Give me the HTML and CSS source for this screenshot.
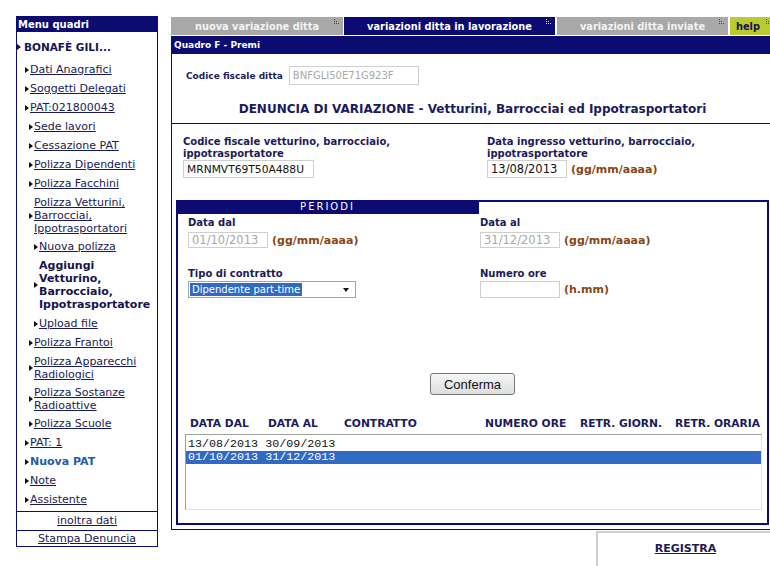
FILE: index.html
```html
<!DOCTYPE html>
<html lang="it">
<head>
  <meta charset="UTF-8">
  <title>Denuncia di variazione - Quadro F</title>
  <link rel="stylesheet" href="styles.css">
</head>
<body>
<div class="page">

  <aside class="menu">
    <div class="menu-head">Menu quadri</div>
    <ul class="menu-list">
      <li class="mi mi-root"><span class="arrow"></span><span>BONAFÈ GILI...</span></li>
      <li class="mi l1"><span class="arrow"></span><a href="#">Dati Anagrafici</a></li>
      <li class="mi l1"><span class="arrow"></span><a href="#">Soggetti Delegati</a></li>
      <li class="mi l1"><span class="arrow"></span><a href="#">PAT:021800043</a></li>
      <li class="mi l2"><span class="arrow"></span><a href="#">Sede lavori</a></li>
      <li class="mi l2"><span class="arrow"></span><a href="#">Cessazione PAT</a></li>
      <li class="mi l2"><span class="arrow"></span><a href="#">Polizza Dipendenti</a></li>
      <li class="mi l2"><span class="arrow"></span><a href="#">Polizza Facchini</a></li>
      <li class="mi l2 multi"><span class="arrow"></span><a href="#">Polizza Vetturini,<br>Barrocciai,<br>Ippotrasportatori</a></li>
      <li class="mi l3"><span class="arrow"></span><a href="#">Nuova polizza</a></li>
      <li class="mi l3 current"><span class="arrow"></span><span>Aggiungi<br>Vetturino,<br>Barrocciaio,<br>Ippotrasportatore</span></li>
      <li class="mi l3"><span class="arrow"></span><a href="#">Upload file</a></li>
      <li class="mi l2"><span class="arrow"></span><a href="#">Polizza Frantoi</a></li>
      <li class="mi l2 multi"><span class="arrow"></span><a href="#">Polizza Apparecchi<br>Radiologici</a></li>
      <li class="mi l2 multi"><span class="arrow"></span><a href="#">Polizza Sostanze<br>Radioattive</a></li>
      <li class="mi l2"><span class="arrow"></span><a href="#">Polizza Scuole</a></li>
      <li class="mi l1"><span class="arrow"></span><a href="#">PAT: 1</a></li>
      <li class="mi l1 new-pat"><span class="arrow"></span><span>Nuova PAT</span></li>
      <li class="mi l1"><span class="arrow"></span><a href="#">Note</a></li>
      <li class="mi l1"><span class="arrow"></span><a href="#">Assistente</a></li>
    </ul>
    <div class="menu-foot"><a href="#">inoltra dati</a></div>
    <div class="menu-foot last"><a href="#">Stampa Denuncia</a></div>
  </aside>

  <main class="main">
    <nav class="tabs">
      <div class="tab tab-off t1">nuova variazione ditta
        <svg class="fold" width="6" height="6" viewBox="0 0 6 6"><path d="M0 0h1v1H0zM0 2h1v1H0zM2 2h1v1H2zM0 4h1v1H0zM2 4h1v1H2zM4 4h1v1H4z" fill="#444"/></svg>
      </div>
      <div class="tab tab-on t2">variazioni ditta in lavorazione
        <svg class="fold" width="6" height="6" viewBox="0 0 6 6"><path d="M0 0h1v1H0zM0 2h1v1H0zM2 2h1v1H2zM0 4h1v1H0zM2 4h1v1H2zM4 4h1v1H4z" fill="#ddd"/></svg>
      </div>
      <div class="tab tab-off t3">variazioni ditta inviate
        <svg class="fold" width="6" height="6" viewBox="0 0 6 6"><path d="M0 0h1v1H0zM0 2h1v1H0zM2 2h1v1H2zM0 4h1v1H0zM2 4h1v1H2zM4 4h1v1H4z" fill="#444"/></svg>
      </div>
      <div class="tab tab-help t4">help
        <svg class="fold" width="6" height="6" viewBox="0 0 6 6"><path d="M0 0h1v1H0zM0 2h1v1H0zM2 2h1v1H2zM0 4h1v1H0zM2 4h1v1H2zM4 4h1v1H4z" fill="#444"/></svg>
      </div>
    </nav>

    <div class="quadro-bar">Quadro F - Premi</div>

    <div class="panel">
      <div class="panel-head">
        <div class="cf-row">
          <label class="lbl-small">Codice fiscale ditta</label>
          <input class="inp inp-cf" type="text" value="BNFGLI50E71G923F" disabled>
        </div>
        <h1 class="title">DENUNCIA DI VARIAZIONE - Vetturini, Barrocciai ed Ippotrasportatori</h1>
      </div>

      <div class="fields">
        <div class="field">
          <label class="lbl">Codice fiscale vetturino, barrocciaio,<br>ippotrasportatore</label>
          <input class="inp inp-code" type="text" value="MRNMVT69T50A488U">
        </div>
        <div class="field">
          <label class="lbl">Data ingresso vetturino, barrocciaio,<br>ippotrasportatore</label>
          <div class="inline">
            <input class="inp inp-date" type="text" value="13/08/2013">
            <span class="fmt">(gg/mm/aaaa)</span>
          </div>
        </div>
      </div>

      <section class="periodi">
        <div class="periodi-head">PERIODI</div>
        <div class="periodi-grid">
          <div class="field">
            <label class="lbl">Data dal</label>
            <div class="inline">
              <input class="inp inp-date" type="text" value="01/10/2013" disabled>
              <span class="fmt">(gg/mm/aaaa)</span>
            </div>
          </div>
          <div class="field">
            <label class="lbl">Data al</label>
            <div class="inline">
              <input class="inp inp-date" type="text" value="31/12/2013" disabled>
              <span class="fmt">(gg/mm/aaaa)</span>
            </div>
          </div>
          <div class="field">
            <label class="lbl">Tipo di contratto</label>
            <div class="select">
              <span class="select-value">Dipendente part-time</span>
              <span class="select-arrow"></span>
            </div>
          </div>
          <div class="field">
            <label class="lbl">Numero ore</label>
            <div class="inline">
              <input class="inp inp-hours" type="text" value="">
              <span class="fmt">(h.mm)</span>
            </div>
          </div>
        </div>

        <div class="actions">
          <button class="btn" type="button">Conferma</button>
        </div>

        <div class="list-head">
          <span>DATA DAL</span>
          <span>DATA AL</span>
          <span>CONTRATTO</span>
          <span>NUMERO ORE</span>
          <span>RETR. GIORN.</span>
          <span>RETR. ORARIA</span>
        </div>
        <div class="listbox">
          <div class="row">13/08/2013 30/09/2013</div>
          <div class="row selected">01/10/2013 31/12/2013</div>
        </div>
      </section>
    </div>

    <div class="footer">
      <div class="registra"><a href="#">REGISTRA</a></div>
    </div>
  </main>

</div>
</body>
</html>
```

FILE: styles.css
```css
* {
  box-sizing: border-box;
}

body {
  margin: 0;
  padding: 16px 0 0 16px;
  font-family: "DejaVu Sans", Verdana, sans-serif;
  color: #1b1b5b;
  background: #fff;
  overflow: hidden;
}

a {
  color: #1a1a55;
}

.page {
  display: flex;
  align-items: flex-start;
  gap: 13px;
}

/* menu laterale */
.menu {
  width: 142px;
  flex: none;
  border: 1px solid #0b0b72;
}

.menu-head {
  height: 15px;
  line-height: 15px;
  padding-left: 1px;
  background: #0b0b72;
  color: #fff;
  font-size: 10px;
  font-weight: bold;
}

.menu-list {
  list-style: none;
  margin: 0 0 2px;
  padding: 0;
}

.mi {
  display: flex;
  align-items: center;
  padding: 3px 0;
  font-size: 11px;
  line-height: 13px;
  white-space: nowrap;
}

.mi.multi {
  padding-bottom: 2px;
}

.arrow {
  flex: none;
  width: 0;
  height: 0;
  margin-right: 1px;
  border-left: 4px solid #111;
  border-top: 3px solid transparent;
  border-bottom: 3px solid transparent;
}

.mi-root {
  padding: 8px 0 6px;
  font-size: 10.5px;
  font-weight: bold;
  line-height: 14px;
  color: #14144f;
}

.mi-root .arrow {
  margin-right: 3px;
}

.l1 { padding-left: 8px; }
.l2 { padding-left: 12px; }
.l3 { padding-left: 17px; }

.current {
  font-weight: bold;
  color: #14144f;
}

.new-pat {
  font-weight: bold;
  color: #1e5ea8;
}

.menu-foot {
  height: 19px;
  line-height: 18px;
  border-top: 1px solid #0b0b72;
  text-align: center;
  font-size: 11px;
}

.menu-foot.last {
  height: 16px;
  line-height: 16px;
}

/* area principale */
.main {
  width: 602px;
  flex: none;
}

.tabs {
  display: flex;
  height: 18px;
  margin-top: 1px;
}

.tab {
  position: relative;
  display: flex;
  align-items: center;
  justify-content: center;
  height: 18px;
  font-size: 9.8px;
  font-weight: bold;
}

.tab-off {
  background: #a8a8a8;
  color: #f4f4f4;
}

.tab-on {
  background: #0b0b72;
  color: #fff;
}

.tab-help {
  background: #b9cb2e;
  color: #14144f;
  justify-content: flex-start;
  padding-left: 6px;
}

.t1 { width: 172px; }
.t2 { width: 211px; margin-left: 1px; }
.t3 { width: 171px; margin-left: 2px; }
.t4 { width: 43px; margin-left: 2px; }

.fold {
  position: absolute;
  top: 2px;
  right: 3px;
}

.t4 .fold {
  right: 1px;
}

.quadro-bar {
  height: 18px;
  line-height: 18px;
  margin-top: 1px;
  padding-left: 3px;
  background: #0b0b72;
  color: #fff;
  font-size: 9px;
  font-weight: bold;
}

.panel {
  border-left: 1px solid #0b0b72;
  border-bottom: 1px solid #0b0b72;
  padding-bottom: 4px;
}

.panel-head {
  padding: 12px 0 6px;
  border-bottom: 1px solid #0b0b72;
}

.cf-row {
  display: flex;
  align-items: center;
  gap: 6px;
  padding-left: 14px;
}

.lbl-small {
  font-size: 9px;
  font-weight: bold;
}

.title {
  margin: 16px 0 0;
  font-size: 12px;
  line-height: 16px;
  text-align: center;
  color: #1b1b5b;
}

.inp {
  display: block;
  margin: 0;
  padding: 0 3px;
  border: 1px solid #cfcfcf;
  background: #fff;
  color: #111;
  font-family: "DejaVu Sans", Verdana, sans-serif;
  outline: none;
}

.inp:disabled {
  color: #a8a8a8;
  background: #fff;
}

.inp-cf {
  width: 130px;
  height: 19px;
  font-size: 10px;
}

.inp-code {
  width: 131px;
  height: 18px;
  font-size: 10.7px;
}

.inp-date {
  width: 80px;
  height: 18px;
  font-size: 11.5px;
}

.inp-hours {
  width: 80px;
  height: 17px;
}

.fields {
  display: grid;
  grid-template-columns: 304px 1fr;
  padding: 12px 0 0 11px;
}

.lbl {
  display: block;
  font-size: 10px;
  font-weight: bold;
  line-height: 12px;
}

.inline {
  display: flex;
  align-items: center;
  gap: 4px;
}

.fmt {
  font-size: 11px;
  font-weight: bold;
  color: #8a4513;
}

/* riquadro periodi */
.periodi {
  margin: 22px 4px 0;
  border: 2px solid #0b0b72;
  padding-bottom: 13px;
}

.periodi-head {
  width: 303px;
  height: 14px;
  line-height: 14px;
  margin: -2px 0 0 -2px;
  background: #0b0b72;
  color: #fff;
  font-size: 10px;
  letter-spacing: 2px;
  text-align: center;
}

.periodi-grid {
  display: grid;
  grid-template-columns: 292px 1fr;
  row-gap: 20px;
  padding: 3px 10px 0;
}

.periodi-grid .lbl {
  margin-bottom: 3px;
}

.periodi-grid .inp-date {
  height: 16px;
}

.periodi-grid .field:nth-child(n+3) .lbl {
  margin-bottom: 1px;
}

.select {
  display: flex;
  align-items: center;
  justify-content: space-between;
  width: 168px;
  height: 17px;
  padding: 0 6px 0 1px;
  border: 1px solid #a5a5a5;
  background: #fff;
}

.select-value {
  padding: 0 2px;
  background: #316ac5;
  color: #fff;
  font-size: 10px;
  line-height: 13px;
  white-space: nowrap;
}

.select-arrow {
  width: 0;
  height: 0;
  border-top: 4px solid #111;
  border-left: 3.5px solid transparent;
  border-right: 3.5px solid transparent;
}

.actions {
  display: flex;
  justify-content: center;
  margin-top: 75px;
}

.btn {
  width: 85px;
  height: 22px;
  padding: 0;
  border: 1px solid #777;
  border-radius: 3px;
  background: linear-gradient(#f6f6f6, #dedede);
  color: #111;
  font-family: "Liberation Sans", Arial, sans-serif;
  font-size: 13px;
}

.list-head {
  display: grid;
  grid-template-columns: 78px 76px 141px 95px 95px auto;
  margin-top: 23px;
  padding-left: 12px;
  font-size: 10.7px;
  font-weight: bold;
  line-height: 12px;
  white-space: nowrap;
}

.listbox {
  height: 76px;
  margin: 4px 5px 0 7px;
  padding-top: 3px;
  border: 1px solid #a0a0a0;
  border-right-color: #e2e2e2;
  border-bottom-color: #e2e2e2;
  font-family: "Liberation Mono", "Courier New", monospace;
  font-size: 11.7px;
  line-height: 13px;
  color: #111;
}

.row {
  padding-left: 2px;
}

.row.selected {
  background: #316ac5;
  color: #fff;
}

/* pulsante registra */
.footer {
  display: flex;
  justify-content: flex-end;
}

.registra {
  width: 177px;
  height: 40px;
  margin-top: 1px;
  padding-top: 10px;
  border-top: 2px solid #cfcfcf;
  border-left: 2px solid #cfcfcf;
  text-align: center;
  font-size: 11px;
  font-weight: bold;
  line-height: 12px;
}
```
